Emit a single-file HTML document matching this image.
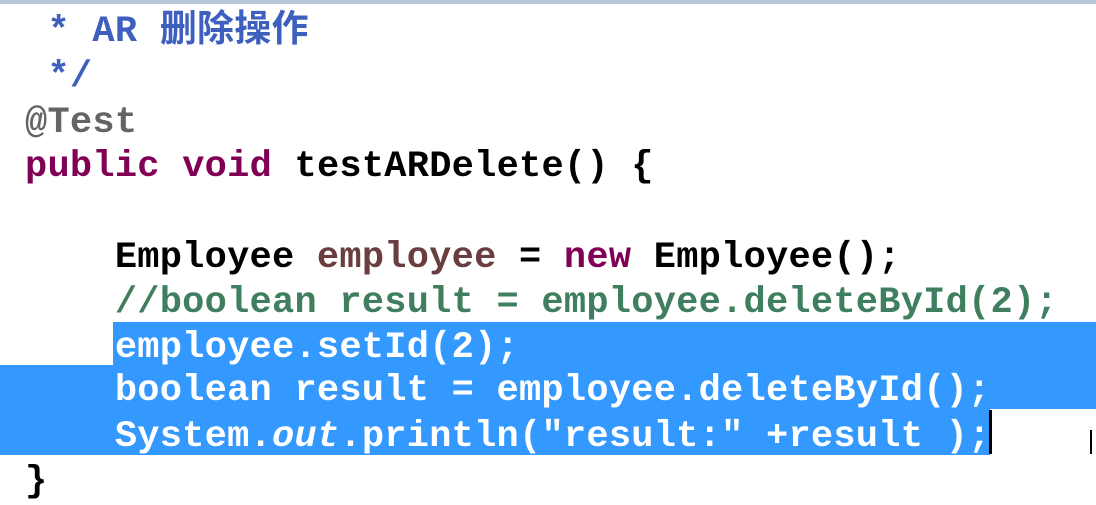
<!DOCTYPE html>
<html><head><meta charset="utf-8"><style>
body{margin:0;width:1096px;height:504px;background:#fff;position:relative;overflow:hidden}
.l{position:absolute;left:0;white-space:pre;font-family:"Liberation Mono","Noto Sans CJK SC",monospace;font-weight:bold;font-size:37px;line-height:45px;color:#000;letter-spacing:0.25px}
.c{color:#3f5fbf}.a{color:#646464}.k{color:#7f0055}.g{color:#3f7f5f}.v{color:#6a3e3e}
.sel{position:absolute;background:#3399ff}
.w{color:#fff}
</style></head><body>
<div style="position:absolute;left:0;top:0;width:1096px;height:4px;background:#b8c8dc"></div>
<div class="sel" style="left:113px;top:322px;width:983px;height:44px"></div>
<div class="sel" style="left:0;top:365px;width:1096px;height:44px"></div>
<div class="sel" style="left:0;top:408px;width:990px;height:47px"></div>
<div style="position:absolute;left:989px;top:410px;width:3px;height:44px;background:#000"></div>
<div style="position:absolute;left:1090px;top:430px;width:2px;height:24px;background:#000"></div>
<div class="l c" style="top:10px;left:25px"> * AR 删除操作</div>
<div class="l c" style="top:55px;left:25px"> */</div>
<div class="l a" style="top:101px;left:25px">@Test</div>
<div class="l" style="top:145px;left:25px"><span class="k">public</span> <span class="k">void</span> testARDelete() {</div>
<div class="l" style="top:236px;left:25px">    Employee <span class="v">employee</span> = <span class="k">new</span> Employee();</div>
<div class="l g" style="top:281px;left:25px">    //boolean result = employee.deleteById(2);</div>
<div class="l w" style="top:326px;left:25px">    employee.setId(2);</div>
<div class="l w" style="top:369px;left:25px">    boolean result = employee.deleteById();</div>
<div class="l w" style="top:415px;left:25px">    System.<i>out</i>.println("result:" +result );</div>
<div class="l" style="top:460px;left:25px">}</div>
</body></html>
